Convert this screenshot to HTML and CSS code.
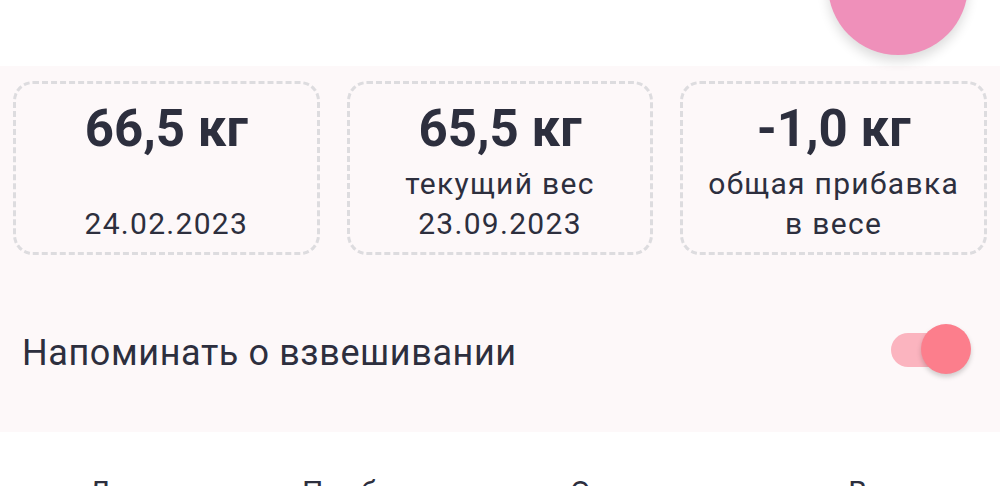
FILE: index.html
```html
<!DOCTYPE html>
<html lang="ru">
<head>
  <meta charset="UTF-8">
  <meta name="viewport" content="width=device-width, initial-scale=1.0">
  <title>Вес</title>
  <link rel="stylesheet" href="styles.css">
</head>
<body>
  <div class="screen">
    <div class="top-bar">
      <button class="fab" aria-label="Добавить">
        <svg viewBox="0 0 24 24" width="34" height="34"><path d="M12 4v16M4 12h16" stroke="#fff" stroke-width="2.6" stroke-linecap="round"/></svg>
      </button>
    </div>

    <section class="summary">
      <div class="cards">
        <div class="card">
          <div class="card-value">66,5 кг</div>
          <div class="card-label">&nbsp;</div>
          <div class="card-label">24.02.2023</div>
        </div>
        <div class="card">
          <div class="card-value">65,5 кг</div>
          <div class="card-label">текущий вес</div>
          <div class="card-label">23.09.2023</div>
        </div>
        <div class="card">
          <div class="card-value">-1,0 кг</div>
          <div class="card-label">общая прибавка<br>в весе</div>
        </div>
      </div>

      <div class="setting-row">
        <span class="setting-title">Напоминать о взвешивании</span>
        <label class="switch">
          <input type="checkbox" checked>
          <span class="switch-track"></span>
          <span class="switch-thumb"></span>
        </label>
      </div>
    </section>

    <div class="table-head">
      <span>Дата</span>
      <span>Прибавка</span>
      <span>Оценка</span>
      <span>Вес</span>
    </div>
  </div>
</body>
</html>
```

FILE: styles.css
```css
html, body {
  margin: 0;
  padding: 0;
  background: #fff;
  font-family: Roboto, "Noto Sans", sans-serif;
  color: #2d2f3e;
}

.screen {
  width: 1000px;
  height: 486px;
  overflow: hidden;
}

.top-bar {
  position: relative;
  height: 66px;
  background: #fff;
}

.fab {
  position: absolute;
  left: 828px;
  top: -85px;
  width: 140px;
  height: 140px;
  border: none;
  border-radius: 50%;
  background: #ef90ba;
  box-shadow: 0 6px 12px rgba(0, 0, 0, 0.14);
  display: flex;
  align-items: flex-start;
  justify-content: center;
  padding-top: 52px;
  box-sizing: border-box;
}

.summary {
  background: #fdf8f9;
  padding: 15px 13px 52px;
}

.cards {
  display: grid;
  grid-template-columns: repeat(3, 1fr);
  gap: 27px;
}

.card {
  border: 3px dashed #dddcdf;
  border-radius: 20px;
  padding: 15px 4px 8px;
  text-align: center;
}

.card-value {
  font-size: 51px;
  line-height: 60px;
  font-weight: 700;
  margin-bottom: 5px;
}

.card-label {
  font-size: 30px;
  line-height: 40px;
  letter-spacing: 1.3px;
}

.setting-row {
  display: flex;
  align-items: center;
  justify-content: space-between;
  margin-top: 65px;
  height: 60px;
  padding: 0 16px 0 9px;
}

.setting-title {
  font-size: 36px;
  letter-spacing: 0.6px;
  padding-top: 6px;
}

.switch {
  position: relative;
  width: 80px;
  height: 52px;
  display: flex;
  align-items: center;
}

.switch input {
  display: none;
}

.switch-track {
  width: 70px;
  height: 34px;
  border-radius: 17px;
  background: #fbb4bf;
}

.switch-thumb {
  position: absolute;
  right: 0;
  top: 0;
  width: 50px;
  height: 50px;
  border-radius: 50%;
  background: #fc7e8c;
  box-shadow: 0 3px 5px rgba(0, 0, 0, 0.18);
}

.table-head {
  display: grid;
  grid-template-columns: repeat(4, 1fr);
  padding-top: 40px;
  font-size: 30px;
  line-height: 40px;
  letter-spacing: 1px;
  text-align: center;
}
```
